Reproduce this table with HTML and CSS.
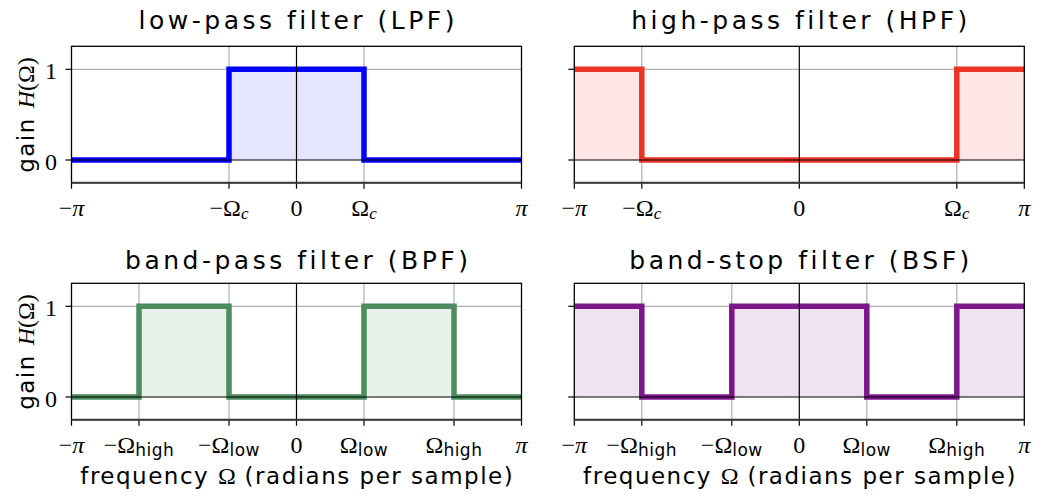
FILE: index.html
```html
<!DOCTYPE html>
<html>
<head>
<meta charset="utf-8">
<link rel="stylesheet" href="styles.css">
</head>
<body>
<div class="figure">
  <!-- LPF -->
  <div class="panel col-left row-top">
    <div class="title">low-pass filter (LPF)</div>
    <svg class="plot" width="545" height="195" viewBox="0 0 545 195">
      <rect class="fill-blue" x="229" y="27.3" width="135" height="90.7"/>
      <g class="grid">
        <line x1="229" y1="4.3" x2="229" y2="140.7"/>
        <line x1="364" y1="4.3" x2="364" y2="140.7"/>
        <line x1="71.5" y1="27.3" x2="521.5" y2="27.3"/>
      </g>
      <path class="curve blue" d="M71.5,118 H229 V27.3 H364 V118 H521.5"/>
      <g class="zero">
        <line x1="71.5" y1="118" x2="521.5" y2="118"/>
        <line x1="296.5" y1="4.3" x2="296.5" y2="140.7"/>
      </g>
      <g class="ticks">
        <line x1="65.5" y1="27.3" x2="71.5" y2="27.3"/>
        <line x1="65.5" y1="118" x2="71.5" y2="118"/>
        <line x1="71.5" y1="140.7" x2="71.5" y2="146.7"/>
        <line x1="229" y1="140.7" x2="229" y2="146.7"/>
        <line x1="296.5" y1="140.7" x2="296.5" y2="146.7"/>
        <line x1="364" y1="140.7" x2="364" y2="146.7"/>
        <line x1="521.5" y1="140.7" x2="521.5" y2="146.7"/>
      </g>
      <rect class="spine" x="71.5" y="4.3" width="450" height="136.4"/>
      <line class="spine-bottom" x1="71.5" y1="140.7" x2="521.5" y2="140.7"/>
      <g class="ylab">
        <text x="57" y="37">1</text>
        <text x="57" y="128">0</text>
      </g>
      <g class="xlab">
        <text x="71.5" y="173.5">−<tspan class="it">π</tspan></text>
        <text x="229" y="173.5">−Ω<tspan class="it sub" dy="3.5">c</tspan></text>
        <text x="296.5" y="173.5">0</text>
        <text x="364" y="173.5">Ω<tspan class="it sub" dy="3.5">c</tspan></text>
        <text x="521.5" y="173.5"><tspan class="it">π</tspan></text>
      </g>
      <text class="ylabel" transform="translate(33.5,73) rotate(-90)"><tspan class="sans">gain </tspan><tspan class="it">H</tspan>(Ω)</text>
    </svg>
  </div>

  <!-- HPF -->
  <div class="panel col-right row-top">
    <div class="title">high-pass filter (HPF)</div>
    <svg class="plot" width="497" height="195" viewBox="0 0 497 195">
      <rect class="fill-red" x="29.3" y="27.3" width="67.5" height="90.7"/>
      <rect class="fill-red" x="411.8" y="27.3" width="67.5" height="90.7"/>
      <g class="grid">
        <line x1="96.8" y1="4.3" x2="96.8" y2="140.7"/>
        <line x1="411.8" y1="4.3" x2="411.8" y2="140.7"/>
        <line x1="29.3" y1="27.3" x2="479.3" y2="27.3"/>
      </g>
      <path class="curve red" d="M29.3,27.3 H96.8 V118 H411.8 V27.3 H479.3"/>
      <g class="zero">
        <line x1="29.3" y1="118" x2="479.3" y2="118"/>
        <line x1="254.3" y1="4.3" x2="254.3" y2="140.7"/>
      </g>
      <g class="ticks">
        <line x1="23.3" y1="27.3" x2="29.3" y2="27.3"/>
        <line x1="23.3" y1="118" x2="29.3" y2="118"/>
        <line x1="29.3" y1="140.7" x2="29.3" y2="146.7"/>
        <line x1="96.8" y1="140.7" x2="96.8" y2="146.7"/>
        <line x1="254.3" y1="140.7" x2="254.3" y2="146.7"/>
        <line x1="411.8" y1="140.7" x2="411.8" y2="146.7"/>
        <line x1="479.3" y1="140.7" x2="479.3" y2="146.7"/>
      </g>
      <rect class="spine" x="29.3" y="4.3" width="450" height="136.4"/>
      <line class="spine-bottom" x1="29.3" y1="140.7" x2="479.3" y2="140.7"/>
      <g class="xlab">
        <text x="29.3" y="173.5">−<tspan class="it">π</tspan></text>
        <text x="96.8" y="173.5">−Ω<tspan class="it sub" dy="3.5">c</tspan></text>
        <text x="254.3" y="173.5">0</text>
        <text x="411.8" y="173.5">Ω<tspan class="it sub" dy="3.5">c</tspan></text>
        <text x="479.3" y="173.5"><tspan class="it">π</tspan></text>
      </g>
    </svg>
  </div>

  <!-- BPF -->
  <div class="panel col-left row-bottom">
    <div class="title">band-pass filter (BPF)</div>
    <svg class="plot" width="545" height="182" viewBox="0 0 545 182">
      <rect class="fill-green" x="139" y="27.3" width="90" height="90.7"/>
      <rect class="fill-green" x="364" y="27.3" width="90" height="90.7"/>
      <g class="grid">
        <line x1="139" y1="4.3" x2="139" y2="140.7"/>
        <line x1="229" y1="4.3" x2="229" y2="140.7"/>
        <line x1="364" y1="4.3" x2="364" y2="140.7"/>
        <line x1="454" y1="4.3" x2="454" y2="140.7"/>
        <line x1="71.5" y1="27.3" x2="521.5" y2="27.3"/>
      </g>
      <path class="curve green" d="M71.5,118 H139 V27.3 H229 V118 H364 V27.3 H454 V118 H521.5"/>
      <g class="zero">
        <line x1="71.5" y1="118" x2="521.5" y2="118"/>
        <line x1="296.5" y1="4.3" x2="296.5" y2="140.7"/>
      </g>
      <g class="ticks">
        <line x1="65.5" y1="27.3" x2="71.5" y2="27.3"/>
        <line x1="65.5" y1="118" x2="71.5" y2="118"/>
        <line x1="71.5" y1="140.7" x2="71.5" y2="146.7"/>
        <line x1="139" y1="140.7" x2="139" y2="146.7"/>
        <line x1="229" y1="140.7" x2="229" y2="146.7"/>
        <line x1="296.5" y1="140.7" x2="296.5" y2="146.7"/>
        <line x1="364" y1="140.7" x2="364" y2="146.7"/>
        <line x1="454" y1="140.7" x2="454" y2="146.7"/>
        <line x1="521.5" y1="140.7" x2="521.5" y2="146.7"/>
      </g>
      <rect class="spine" x="71.5" y="4.3" width="450" height="136.4"/>
      <line class="spine-bottom" x1="71.5" y1="140.7" x2="521.5" y2="140.7"/>
      <g class="ylab">
        <text x="57" y="37">1</text>
        <text x="57" y="128">0</text>
      </g>
      <g class="xlab">
        <text x="71.5" y="173.5">−<tspan class="it">π</tspan></text>
        <text x="139" y="173.5">−Ω<tspan class="sans sub" dy="3.5">high</tspan></text>
        <text x="229" y="173.5">−Ω<tspan class="sans sub" dy="3.5">low</tspan></text>
        <text x="296.5" y="173.5">0</text>
        <text x="364" y="173.5">Ω<tspan class="sans sub" dy="3.5">low</tspan></text>
        <text x="454" y="173.5">Ω<tspan class="sans sub" dy="3.5">high</tspan></text>
        <text x="521.5" y="173.5"><tspan class="it">π</tspan></text>
      </g>
      <text class="ylabel" transform="translate(33.5,73) rotate(-90)"><tspan class="sans">gain </tspan><tspan class="it">H</tspan>(Ω)</text>
    </svg>
    <div class="xlabel">frequency <span class="serif">Ω</span> (radians per sample)</div>
  </div>

  <!-- BSF -->
  <div class="panel col-right row-bottom">
    <div class="title">band-stop filter (BSF)</div>
    <svg class="plot" width="497" height="182" viewBox="0 0 497 182">
      <rect class="fill-purple" x="29.3" y="27.3" width="67.5" height="90.7"/>
      <rect class="fill-purple" x="186.8" y="27.3" width="135" height="90.7"/>
      <rect class="fill-purple" x="411.8" y="27.3" width="67.5" height="90.7"/>
      <g class="grid">
        <line x1="96.8" y1="4.3" x2="96.8" y2="140.7"/>
        <line x1="186.8" y1="4.3" x2="186.8" y2="140.7"/>
        <line x1="321.8" y1="4.3" x2="321.8" y2="140.7"/>
        <line x1="411.8" y1="4.3" x2="411.8" y2="140.7"/>
        <line x1="29.3" y1="27.3" x2="479.3" y2="27.3"/>
      </g>
      <path class="curve purple" d="M29.3,27.3 H96.8 V118 H186.8 V27.3 H321.8 V118 H411.8 V27.3 H479.3"/>
      <g class="zero">
        <line x1="29.3" y1="118" x2="479.3" y2="118"/>
        <line x1="254.3" y1="4.3" x2="254.3" y2="140.7"/>
      </g>
      <g class="ticks">
        <line x1="23.3" y1="27.3" x2="29.3" y2="27.3"/>
        <line x1="23.3" y1="118" x2="29.3" y2="118"/>
        <line x1="29.3" y1="140.7" x2="29.3" y2="146.7"/>
        <line x1="96.8" y1="140.7" x2="96.8" y2="146.7"/>
        <line x1="186.8" y1="140.7" x2="186.8" y2="146.7"/>
        <line x1="254.3" y1="140.7" x2="254.3" y2="146.7"/>
        <line x1="321.8" y1="140.7" x2="321.8" y2="146.7"/>
        <line x1="411.8" y1="140.7" x2="411.8" y2="146.7"/>
        <line x1="479.3" y1="140.7" x2="479.3" y2="146.7"/>
      </g>
      <rect class="spine" x="29.3" y="4.3" width="450" height="136.4"/>
      <line class="spine-bottom" x1="29.3" y1="140.7" x2="479.3" y2="140.7"/>
      <g class="xlab">
        <text x="29.3" y="173.5">−<tspan class="it">π</tspan></text>
        <text x="96.8" y="173.5">−Ω<tspan class="sans sub" dy="3.5">high</tspan></text>
        <text x="186.8" y="173.5">−Ω<tspan class="sans sub" dy="3.5">low</tspan></text>
        <text x="254.3" y="173.5">0</text>
        <text x="321.8" y="173.5">Ω<tspan class="sans sub" dy="3.5">low</tspan></text>
        <text x="411.8" y="173.5">Ω<tspan class="sans sub" dy="3.5">high</tspan></text>
        <text x="479.3" y="173.5"><tspan class="it">π</tspan></text>
      </g>
    </svg>
    <div class="xlabel">frequency <span class="serif">Ω</span> (radians per sample)</div>
  </div>
</div>
</body>
</html>
```

FILE: styles.css
```css
html, body {
  margin: 0;
  padding: 0;
  background: #ffffff;
}

.figure {
  width: 1042px;
  height: 496px;
  display: grid;
  grid-template-columns: 545px 497px;
  grid-template-rows: 237px 259px;
  overflow: hidden;
}

.panel {
  display: flex;
  flex-direction: column;
}

.plot {
  display: block;
  overflow: visible;
}

.title {
  height: 42px;
  line-height: 42px;
  width: 450px;
  text-align: center;
  text-indent: 3.5px;
  font-family: "DejaVu Sans", sans-serif;
  font-size: 25px;
  letter-spacing: 3.5px;
  color: #000;
  white-space: nowrap;
}

.row-bottom .title {
  height: 39px;
  padding-top: 3px;
}

.col-left .title,
.col-left .xlabel {
  margin-left: 71.5px;
}

.col-right .title,
.col-right .xlabel {
  margin-left: 29.3px;
}

.xlabel {
  width: 450px;
  height: 35px;
  line-height: 30px;
  text-align: center;
  text-indent: 1.5px;
  font-family: "DejaVu Sans", sans-serif;
  font-size: 23px;
  letter-spacing: 1.5px;
  color: #000;
  white-space: nowrap;
}

.serif {
  font-family: "Liberation Serif", serif;
  font-size: 24px;
  letter-spacing: 0;
}

.grid line {
  stroke: #b0b0b0;
  stroke-width: 1.2;
}

.zero line {
  stroke: #000;
  stroke-width: 1.2;
}

.ticks line {
  stroke: #000;
  stroke-width: 1.2;
}

.spine {
  fill: none;
  stroke: #000;
  stroke-width: 1.3;
}

.spine-bottom {
  stroke: #3a3a3a;
  stroke-width: 2;
}

.curve {
  fill: none;
  stroke-width: 5.5;
  stroke-linejoin: miter;
  stroke-linecap: butt;
}

.curve.blue { stroke: #0000ff; }
.curve.red { stroke: #ec3426; }
.curve.green { stroke: #4b8b5d; }
.curve.purple { stroke: #7b1788; }

.fill-blue { fill: rgba(0, 0, 255, 0.1); }
.fill-red { fill: rgba(236, 52, 38, 0.12); }
.fill-green { fill: rgba(75, 139, 93, 0.12); }
.fill-purple { fill: rgba(123, 23, 136, 0.12); }

.xlab text,
.ylab text,
.ylabel {
  font-family: "Liberation Serif", "DejaVu Serif", serif;
  font-size: 24px;
  fill: #000;
}

.xlab text {
  text-anchor: middle;
}

.ylab text {
  text-anchor: end;
}

.ylabel {
  text-anchor: middle;
}

.it {
  font-style: italic;
}

.sub {
  font-size: 17px;
}

.sans {
  font-family: "DejaVu Sans", sans-serif;
  letter-spacing: 0.5px;
}

.ylabel .sans {
  font-size: 23px;
  letter-spacing: 1.5px;
}
```
